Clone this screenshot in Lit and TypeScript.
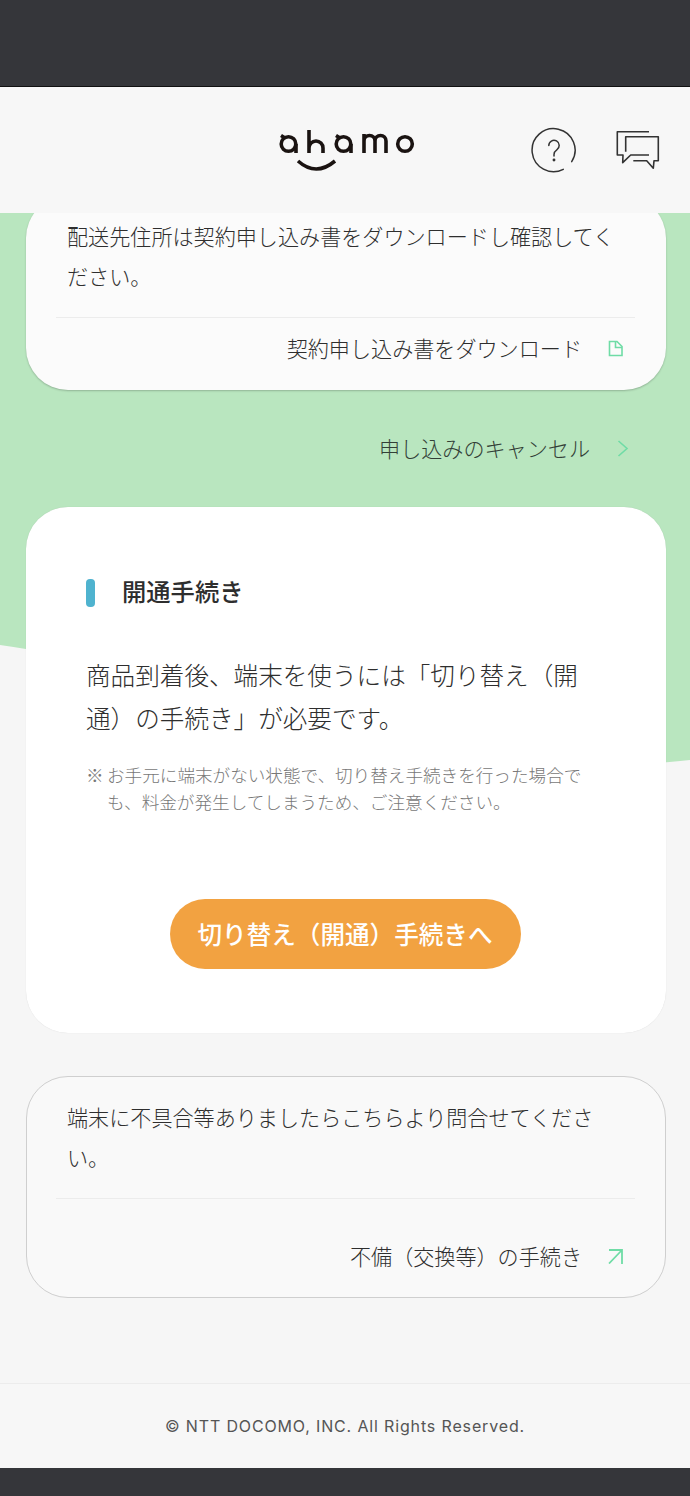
import { LitElement, css, html } from "lit";
import { customElement } from "lit/decorators.js";

@customElement("app-root")
export class AppRoot extends LitElement {
  static styles = css`
    :host {
      display: block;
      width: 690px;
      height: 1496px;
      font-family: "Noto Sans CJK JP", "Noto Sans", sans-serif;
      font-weight: 300;
      color: #2e2e2e;
      background: #f6f6f6;
    }
    .page {
      display: flex;
      flex-direction: column;
      height: 1496px;
      overflow: hidden;
    }
    .status {
      height: 86px;
      flex: none;
      background: #35363a;
      border-bottom: 1px solid #111;
    }
    .header {
      position: relative;
      z-index: 2;
      height: 126px;
      flex: none;
      display: grid;
      grid-template-columns: 1fr auto 1fr;
      align-items: center;
      background: #f7f7f7;
    }
    .logo {
      grid-column: 2;
      display: block;
      margin-left: 3px;
    }
    .tools {
      grid-column: 3;
      display: flex;
      justify-content: flex-end;
      align-items: center;
      gap: 39px;
      padding-right: 30px;
    }
    .tools svg {
      display: block;
    }
    .main {
      position: relative;
      flex: 1;
      overflow: hidden;
      display: flex;
      flex-direction: column;
      padding: 0 24px 0 26px;
    }
    .wave {
      position: absolute;
      top: 0;
      left: 0;
    }
    .card {
      position: relative;
      flex: none;
      box-sizing: border-box;
      width: 640px;
      border-radius: 42px;
      background: #fbfbfb;
      padding: 20px 31px 0 30px;
    }
    .card.first {
      margin-top: -17px;
      height: 194px;
      box-shadow: 0 1px 2px rgba(0, 0, 0, 0.22);
    }
    .card.plain {
      margin-top: 43px;
      height: 222px;
      border: 1px solid #cfcfcf;
      padding: 20px 30px 0 29px;
      background: #f9f9f9;
    }
    .text {
      margin: 0;
      padding: 0 12px 0 11px;
      font-size: 21.1px;
      line-height: 40px;
    }
    .rule {
      height: 1px;
      margin-top: 21px;
      background: #ececec;
    }
    .link {
      display: flex;
      justify-content: flex-end;
      align-items: center;
      gap: 26px;
      font-size: 21.1px;
      line-height: 30px;
      padding-right: 12px;
    }
    .card.first .link {
      margin-top: 15px;
    }
    .card.plain .link {
      margin-top: 42px;
    }
    .cancel {
      position: relative;
      margin-top: 43px;
      padding-right: 37px;
      gap: 27px;
      color: #333f37;
    }
    .link svg {
      display: block;
      flex: none;
    }
    .panel {
      position: relative;
      flex: none;
      box-sizing: border-box;
      width: 640px;
      height: 526px;
      margin-top: 44px;
      border-radius: 42px;
      background: #fff;
      box-shadow: 0 0 1px rgba(0, 0, 0, 0.15);
      padding: 72px 76px 0 60px;
    }
    .title {
      display: flex;
      align-items: center;
      gap: 27px;
      font-size: 24.3px;
      font-weight: 500;
      line-height: 28px;
      color: #2e2e2e;
    }
    .title .name {
      margin-top: -4px;
    }
    .bar {
      width: 9px;
      height: 28px;
      border-radius: 4px;
      background: #4fb3cf;
    }
    .lead {
      margin: 46px 0 0;
      font-size: 24.6px;
      line-height: 43px;
    }
    .note {
      display: flex;
      margin: 22px 0 0;
      font-size: 17.6px;
      line-height: 27px;
      color: #787878;
    }
    .note span {
      flex: none;
      width: 21px;
    }
    .note p {
      margin: 0;
    }
    .action {
      display: flex;
      justify-content: center;
      margin: 84px 0 0 -61px;
      width: 640px;
    }
    .button {
      width: 351px;
      height: 70px;
      border: none;
      border-radius: 35px;
      background: #f2a241;
      color: #fff;
      font: 500 24.6px "Noto Sans CJK JP", "Noto Sans", sans-serif;
      padding: 0 0 2px;
    }
    .footer {
      flex: none;
      height: 84px;
      display: flex;
      justify-content: center;
      align-items: center;
      border-top: 1px solid #ececec;
      background: #f7f7f7;
      font-family: Inter, "Noto Sans", sans-serif;
      font-weight: 400;
      font-size: 16px;
      letter-spacing: 0.85px;
      color: #555;
    }
    .nav {
      height: 28px;
      flex: none;
      background: #35363a;
    }
  `;

  render() {
    return html`
      <div class="page">
        <div class="status"></div>
        <header class="header">
          <svg class="logo" width="136" height="42" viewBox="0 0 136 42" fill="none" stroke="#1a1311" stroke-width="3.6">
            <circle cx="9.5" cy="15" r="7.3"></circle>
            <path d="M2 6.500l4 2.500M17 15v9"></path>
            <path d="M30 1v23M30 19a7 7 0 0 1 14 0v5"></path>
            <circle cx="64.500" cy="15" r="7.3"></circle>
            <path d="M57 6.500l4 2.500M72 15v9"></path>
            <path d="M85 5v19M85 12a5.500 5.500 0 0 1 11 0v12M96 12a5.500 5.500 0 0 1 11 0v12"></path>
            <circle cx="126" cy="15" r="7.3"></circle>
            <path d="M19 32q18 16 37 0"></path>
          </svg>
          <div class="tools">
            <svg width="46" height="46" viewBox="0 0 46 46" fill="none" stroke="#333" stroke-width="1.5" stroke-linecap="round">
              <path d="M32.300 42.300A21.500 21.500 0 1 1 40.700 34.700"></path>
              <path d="M17.800 18.500a5.200 5.200 0 1 1 8 4.400c-1.700 1.200-2.800 2.300-2.800 4.600v1.500"></path>
              <circle cx="23" cy="33" r="0.7" fill="#333"></circle>
            </svg>
            <svg width="44" height="40" viewBox="0 0 44 40" fill="none" stroke="#333" stroke-width="1.600" stroke-linejoin="round">
              <path d="M33 1.700H1.300V25H7L6.700 32.700L14.700 25H33"></path>
              <path d="M9.700 21.700V6.700H42.300V30.700H38L37.300 38.300L30.700 30.700H17.300"></path>
            </svg>
          </div>
        </header>
        <main class="main">
          <svg class="wave" width="690" height="560" viewBox="0 0 690 560">
            <path d="M0 0H690V547C640 552 560 562 450 530C300 490 120 450 0 432Z" fill="#b9e6bf"></path>
          </svg>
          <section class="card first">
            <p class="text">配送先住所は契約申し込み書をダウンロードし確認してください。</p>
            <div class="rule"></div>
            <div class="link">
              <span>契約申し込み書をダウンロード</span>
              <svg width="15" height="17" viewBox="0 0 15 17" fill="none" stroke="#6fdca6" stroke-width="1.600">
                <path d="M1.500 1.500H9L14 6.500V15.500H1.500Z"></path>
                <path d="M7.500 1.500V7.500H14"></path>
              </svg>
            </div>
          </section>
          <div class="link cancel">
            <span>申し込みのキャンセル</span>
            <svg width="12" height="17" viewBox="0 0 12 17" fill="none" stroke="#6fdca6" stroke-width="1.600">
              <path d="M1.500 1L10 8.500L1.500 16"></path>
            </svg>
          </div>
          <section class="panel">
            <div class="title"><span class="bar"></span><span class="name">開通手続き</span></div>
            <p class="lead">商品到着後、端末を使うには「切り替え（開通）の手続き」が必要です。</p>
            <div class="note">
              <span>※</span>
              <p>お手元に端末がない状態で、切り替え手続きを行った場合でも、料金が発生してしまうため、ご注意ください。</p>
            </div>
            <div class="action"><button class="button">切り替え（開通）手続きへ</button></div>
          </section>
          <section class="card plain">
            <p class="text">端末に不具合等ありましたらこちらより問合せてください。</p>
            <div class="rule"></div>
            <div class="link">
              <span>不備（交換等）の手続き</span>
              <svg width="15" height="15" viewBox="0 0 15 15" fill="none" stroke="#6fdca6" stroke-width="1.800">
                <path d="M1 1H14V15M14 1L1 14.500"></path>
              </svg>
            </div>
          </section>
        </main>
        <footer class="footer">© NTT DOCOMO, INC. All Rights Reserved.</footer>
        <div class="nav"></div>
      </div>
    `;
  }
}
